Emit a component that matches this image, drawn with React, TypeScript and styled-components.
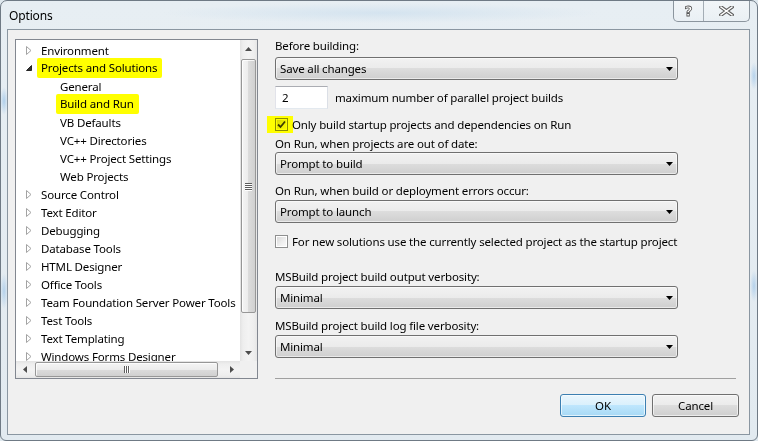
import React from 'react';
import styled, { createGlobalStyle } from 'styled-components';

const FONT = `"Noto Sans", "Open Sans", "DejaVu Sans", sans-serif`;

const GlobalStyle = createGlobalStyle`
  *, *::before, *::after { box-sizing: border-box; }
  html, body { margin: 0; padding: 0; }
  body {
    background: #dfe8ee;
    font-family: ${FONT};
    font-size: 11.5px;
    letter-spacing: -0.15px;
    color: #000;
  }
`;

const treeItems: { label: string; child?: boolean; open?: boolean; mark?: boolean }[] = [
  { label: 'Environment' },
  { label: 'Projects and Solutions', open: true, mark: true },
  { label: 'General', child: true },
  { label: 'Build and Run', child: true, mark: true },
  { label: 'VB Defaults', child: true },
  { label: 'VC++ Directories', child: true },
  { label: 'VC++ Project Settings', child: true },
  { label: 'Web Projects', child: true },
  { label: 'Source Control' },
  { label: 'Text Editor' },
  { label: 'Debugging' },
  { label: 'Database Tools' },
  { label: 'HTML Designer' },
  { label: 'Office Tools' },
  { label: 'Team Foundation Server Power Tools' },
  { label: 'Test Tools' },
  { label: 'Text Templating' },
  { label: 'Windows Forms Designer' },
];

const Collapsed = () => (
  <svg width="6" height="9" viewBox="0 0 6 9">
    <path d="M0.5 0.5 L5 4.5 L0.5 8.5 Z" fill="#fff" stroke="#a3a3a3" strokeWidth="1" />
  </svg>
);

const Expanded = () => (
  <svg width="6" height="6" viewBox="0 0 6 6">
    <path d="M5.5 0.5 L5.5 5.5 L0.5 5.5 Z" fill="#333" stroke="#262626" strokeWidth="1" />
  </svg>
);

const Arrow = ({ dir }: { dir: 'up' | 'down' | 'left' | 'right' }) => {
  const d = {
    up: 'M0 4 L3.5 0 L7 4 Z',
    down: 'M0 0 L7 0 L3.5 4 Z',
    left: 'M4 0 L4 7 L0 3.5 Z',
    right: 'M0 0 L4 3.5 L0 7 Z',
  }[dir];
  const vertical = dir === 'up' || dir === 'down';
  return (
    <svg width={vertical ? 7 : 4} height={vertical ? 4 : 7} viewBox={vertical ? '0 0 7 4' : '0 0 4 7'}>
      <path d={d} fill="#4d4d4d" />
    </svg>
  );
};

const ComboArrow = () => (
  <svg width="7" height="4" viewBox="0 0 7 4">
    <path d="M0 0 L7 0 L3.5 4 Z" fill="#000" />
  </svg>
);

const CheckMark = () => (
  <svg width="11" height="11" viewBox="0 0 11 11">
    <path d="M2 5.5 L4.5 8 L9 2.5" fill="none" stroke="#3b3b2a" strokeWidth="1.8" />
  </svg>
);

const CloseGlyph = () => (
  <svg width="15" height="10" viewBox="0 0 15 10">
    <path d="M2 1 L13 9 M13 1 L2 9" stroke="#5e5e5e" strokeWidth="3.6" strokeLinecap="square" />
    <path d="M2 1 L13 9 M13 1 L2 9" stroke="#fff" strokeWidth="1.4" strokeLinecap="square" />
  </svg>
);

const App = () => {
  return (
    <>
      <GlobalStyle />
      <Window>
        <TitleBar>
          <TitleText>Options</TitleText>
          <CaptionButtons>
            <CaptionButton $w={29}>
              <HelpGlyph>?</HelpGlyph>
            </CaptionButton>
            <CaptionButton $w={46} $divider>
              <CloseGlyph />
            </CaptionButton>
          </CaptionButtons>
        </TitleBar>

        <Client>
          <Main>
            <TreeBox>
              <TreeList>
                {treeItems.map((item) => (
                  <TreeRow key={item.label} $child={item.child}>
                    {!item.child && <Expander>{item.open ? <Expanded /> : <Collapsed />}</Expander>}
                    {item.mark ? <Marker>{item.label}</Marker> : <span>{item.label}</span>}
                  </TreeRow>
                ))}
              </TreeList>
              <VScroll>
                <ScrollButton>
                  <Arrow dir="up" />
                </ScrollButton>
                <VThumb>
                  <VGrip>
                    <i />
                    <i />
                    <i />
                    <i />
                  </VGrip>
                </VThumb>
                <ScrollButton>
                  <Arrow dir="down" />
                </ScrollButton>
              </VScroll>
              <HScroll>
                <ScrollButton>
                  <Arrow dir="left" />
                </ScrollButton>
                <HThumb>
                  <HGrip>
                    <i />
                    <i />
                    <i />
                  </HGrip>
                </HThumb>
                <ScrollButton>
                  <Arrow dir="right" />
                </ScrollButton>
              </HScroll>
              <Corner />
            </TreeBox>

            <Panel>
              <FieldLabel $mt={-1}>Before building:</FieldLabel>
              <Combo $mt={3}>
                <span>Save all changes</span>
                <ComboArrow />
              </Combo>

              <NumberRow>
                <NumberBox>2</NumberBox>
                <span>maximum number of parallel project builds</span>
              </NumberRow>

              <CheckRow $mt={7}>
                <CheckMarker>
                  <CheckBox $checked>
                    <CheckMark />
                  </CheckBox>
                </CheckMarker>
                <span>Only build startup projects and dependencies on Run</span>
              </CheckRow>

              <FieldLabel $mt={3}>On Run, when projects are out of date:</FieldLabel>
              <Combo $mt={0}>
                <span>Prompt to build</span>
                <ComboArrow />
              </Combo>

              <FieldLabel $mt={8}>On Run, when build or deployment errors occur:</FieldLabel>
              <Combo $mt={1}>
                <span>Prompt to launch</span>
                <ComboArrow />
              </Combo>

              <CheckRow $mt={10}>
                <CheckBox />
                <span>For new solutions use the currently selected project as the startup project</span>
              </CheckRow>

              <FieldLabel $mt={19}>MSBuild project build output verbosity:</FieldLabel>
              <Combo $mt={1}>
                <span>Minimal</span>
                <ComboArrow />
              </Combo>

              <FieldLabel $mt={9}>MSBuild project build log file verbosity:</FieldLabel>
              <Combo $mt={1}>
                <span>Minimal</span>
                <ComboArrow />
              </Combo>

              <Separator />
            </Panel>
          </Main>

          <Footer>
            <DialogButton $w={86} $default>
              OK
            </DialogButton>
            <DialogButton $w={87}>Cancel</DialogButton>
          </Footer>
        </Client>
      </Window>
    </>
  );
};

export default App;

const Window = styled.div`
  width: 758px;
  height: 441px;
  display: flex;
  flex-direction: column;
  padding: 0 7px 5px 6px;
  border: 1px solid #6f7a85;
  border-radius: 7px 7px 6px 6px;
  overflow: hidden;
  background:
    radial-gradient(ellipse 4px 14px at 3px 100px, rgba(110, 170, 225, 0.45), transparent),
    radial-gradient(ellipse 4px 18px at 3px 290px, rgba(110, 170, 225, 0.4), transparent),
    radial-gradient(ellipse 4px 14px at 753px 75px, rgba(110, 170, 225, 0.4), transparent),
    radial-gradient(ellipse 4px 16px at 753px 285px, rgba(110, 170, 225, 0.4), transparent),
    radial-gradient(ellipse 220px 10px at 380px 12px, rgba(190, 215, 235, 0.45), transparent),
    linear-gradient(#e7eef3, #e2eaf0);
`;

const TitleBar = styled.div`
  height: 28px;
  display: flex;
  justify-content: space-between;
  align-items: flex-start;
`;

const TitleText = styled.div`
  padding-left: 2px;
  padding-top: 1px;
  line-height: 28px;
  font-size: 12px;
`;

const CaptionButtons = styled.div`
  display: flex;
  height: 22px;
  margin-top: -1px;
  border: 1px solid #8b959e;
  border-top: none;
  border-radius: 0 0 5px 5px;
  overflow: hidden;
  background: linear-gradient(rgba(255, 255, 255, 0.45), rgba(240, 244, 247, 0.3));
`;

const CaptionButton = styled.div<{ $w: number; $divider?: boolean }>`
  width: ${(p) => p.$w}px;
  display: flex;
  align-items: center;
  justify-content: center;
  border-left: ${(p) => (p.$divider ? '1px solid #a4adb5' : 'none')};
`;

const HelpGlyph = styled.span`
  font-family: "DejaVu Sans", sans-serif;
  font-weight: bold;
  font-size: 14px;
  line-height: 14px;
  color: #fff;
  -webkit-text-stroke: 0.8px #555;
  margin-top: 1px;
`;

const Client = styled.div`
  flex: 1;
  display: flex;
  flex-direction: column;
  border: 1px solid #8a96a1;
  background: #f0f0f0;
  padding: 9px 0 0 7px;
`;

const Main = styled.div`
  display: flex;
  gap: 17px;
  height: 340px;
`;

const TreeBox = styled.div`
  width: 243px;
  height: 340px;
  border: 1px solid #828790;
  background: #fff;
  display: grid;
  grid-template-columns: 224px 17px;
  grid-template-rows: 321px 17px;
`;

const TreeList = styled.div`
  overflow: hidden;
  padding-top: 1px;
`;

const TreeRow = styled.div<{ $child?: boolean }>`
  height: 18px;
  display: flex;
  align-items: center;
  padding-left: ${(p) => (p.$child ? 44 : 10)}px;
  white-space: nowrap;
`;

const Expander = styled.span`
  width: 8px;
  flex: none;
  margin-right: 7px;
  display: flex;
  align-items: center;
`;

const Marker = styled.span`
  background: #ffff00;
  padding: 2px 5px 2px 4px;
  margin-left: -4px;
  border-radius: 2px;
  line-height: 16px;
`;

const ScrollButton = styled.div`
  width: 17px;
  height: 17px;
  flex: none;
  display: flex;
  align-items: center;
  justify-content: center;
`;

const VScroll = styled.div`
  display: flex;
  flex-direction: column;
  justify-content: space-between;
  background: linear-gradient(to right, #e3e3e3 0, #eeeeee 3px, #f3f3f3 50%, #eeeeee 14px, #e6e6e6 100%);
`;

const VThumb = styled.div`
  margin: 2px 1px auto 1px;
  height: 254px;
  border: 1px solid #979797;
  border-radius: 2px;
  background: linear-gradient(to right, #f5f5f5 0%, #ececec 50%, #dcdcdc 50%, #d0d0d0 100%);
  box-shadow: inset 1px 1px 0 rgba(255, 255, 255, 0.8);
  display: flex;
  align-items: center;
  justify-content: center;
`;

const VGrip = styled.div`
  display: flex;
  flex-direction: column;
  gap: 1px;
  i {
    display: block;
    width: 7px;
    height: 1px;
    background: #5c5c5c;
    box-shadow: 0 1px 0 #fff;
  }
`;

const HScroll = styled.div`
  display: flex;
  align-items: stretch;
  background: linear-gradient(#e3e3e3 0, #eeeeee 3px, #f3f3f3 50%, #eeeeee 14px, #e6e6e6 100%);
`;

const HThumb = styled.div`
  margin: 1px auto 1px 2px;
  width: 183px;
  border: 1px solid #979797;
  border-radius: 2px;
  background: linear-gradient(#f5f5f5 0%, #ececec 50%, #dcdcdc 50%, #d0d0d0 100%);
  box-shadow: inset 1px 1px 0 rgba(255, 255, 255, 0.8);
  display: flex;
  align-items: center;
  justify-content: center;
`;

const HGrip = styled.div`
  display: flex;
  gap: 1px;
  i {
    display: block;
    width: 1px;
    height: 7px;
    background: #5c5c5c;
    box-shadow: 1px 0 0 #fff;
  }
`;

const Corner = styled.div`
  background: #f0f0f0;
`;

const Panel = styled.div`
  width: 461px;
  display: flex;
  flex-direction: column;
`;

const FieldLabel = styled.div<{ $mt: number }>`
  line-height: 16px;
  margin-top: ${(p) => p.$mt}px;
  white-space: nowrap;
`;

const Combo = styled.div<{ $mt: number }>`
  width: 403px;
  height: 23px;
  margin-top: ${(p) => p.$mt}px;
  padding: 0 4px;
  display: flex;
  align-items: center;
  justify-content: space-between;
  border: 1px solid #707070;
  border-radius: 3px;
  background: linear-gradient(#f2f2f2 0%, #ebebeb 50%, #dddddd 50%, #cfcfcf 100%);
  box-shadow: inset 0 0 0 1px rgba(255, 255, 255, 0.55);
`;

const NumberRow = styled.div`
  margin-top: 6px;
  height: 23px;
  display: flex;
  align-items: center;
  gap: 7px;
`;

const NumberBox = styled.div`
  width: 53px;
  height: 23px;
  padding-left: 6px;
  display: flex;
  align-items: center;
  background: #fff;
  border: 1px solid;
  border-color: #abadb3 #dbdfe6 #e3e9ef #e2e3ea;
`;

const CheckRow = styled.div<{ $mt: number }>`
  margin-top: ${(p) => p.$mt}px;
  height: 17px;
  display: flex;
  align-items: center;
  gap: 4px;
  white-space: nowrap;
`;

const CheckMarker = styled.span`
  display: flex;
  align-items: center;
  height: 17px;
  padding: 0 5px 0 8px;
  margin: 0 -5px 0 -8px;
  background: #ffff00;
`;

const CheckBox = styled.span<{ $checked?: boolean }>`
  width: 13px;
  height: 13px;
  flex: none;
  display: flex;
  align-items: center;
  justify-content: center;
  border: 1px solid #8e8f8f;
  background: linear-gradient(135deg, #d6d6d6 0%, #f0f0f0 60%, #fbfbfb 100%);
  box-shadow: inset 0 0 0 1px #fff;
  mix-blend-mode: ${(p) => (p.$checked ? 'multiply' : 'normal')};
`;

const Separator = styled.div`
  margin-top: auto;
  height: 1px;
  background: #a0a0a0;
`;

const Footer = styled.div`
  display: flex;
  justify-content: flex-end;
  gap: 6px;
  padding: 15px 10px 0 0;
`;

const DialogButton = styled.div<{ $w: number; $default?: boolean }>`
  width: ${(p) => p.$w}px;
  height: 23px;
  display: flex;
  align-items: center;
  justify-content: center;
  border-radius: 3px;
  border: 1px solid ${(p) => (p.$default ? '#3c7fb1' : '#707070')};
  background: ${(p) =>
    p.$default
      ? 'linear-gradient(#eaf6fd 0%, #d9f0fc 50%, #bee6fd 50%, #a7d9f5 100%)'
      : 'linear-gradient(#f2f2f2 0%, #ebebeb 50%, #dddddd 50%, #cfcfcf 100%)'};
  box-shadow: inset 0 0 0 1px ${(p) => (p.$default ? 'rgba(250, 253, 255, 0.7)' : 'rgba(255, 255, 255, 0.6)')};
`;
